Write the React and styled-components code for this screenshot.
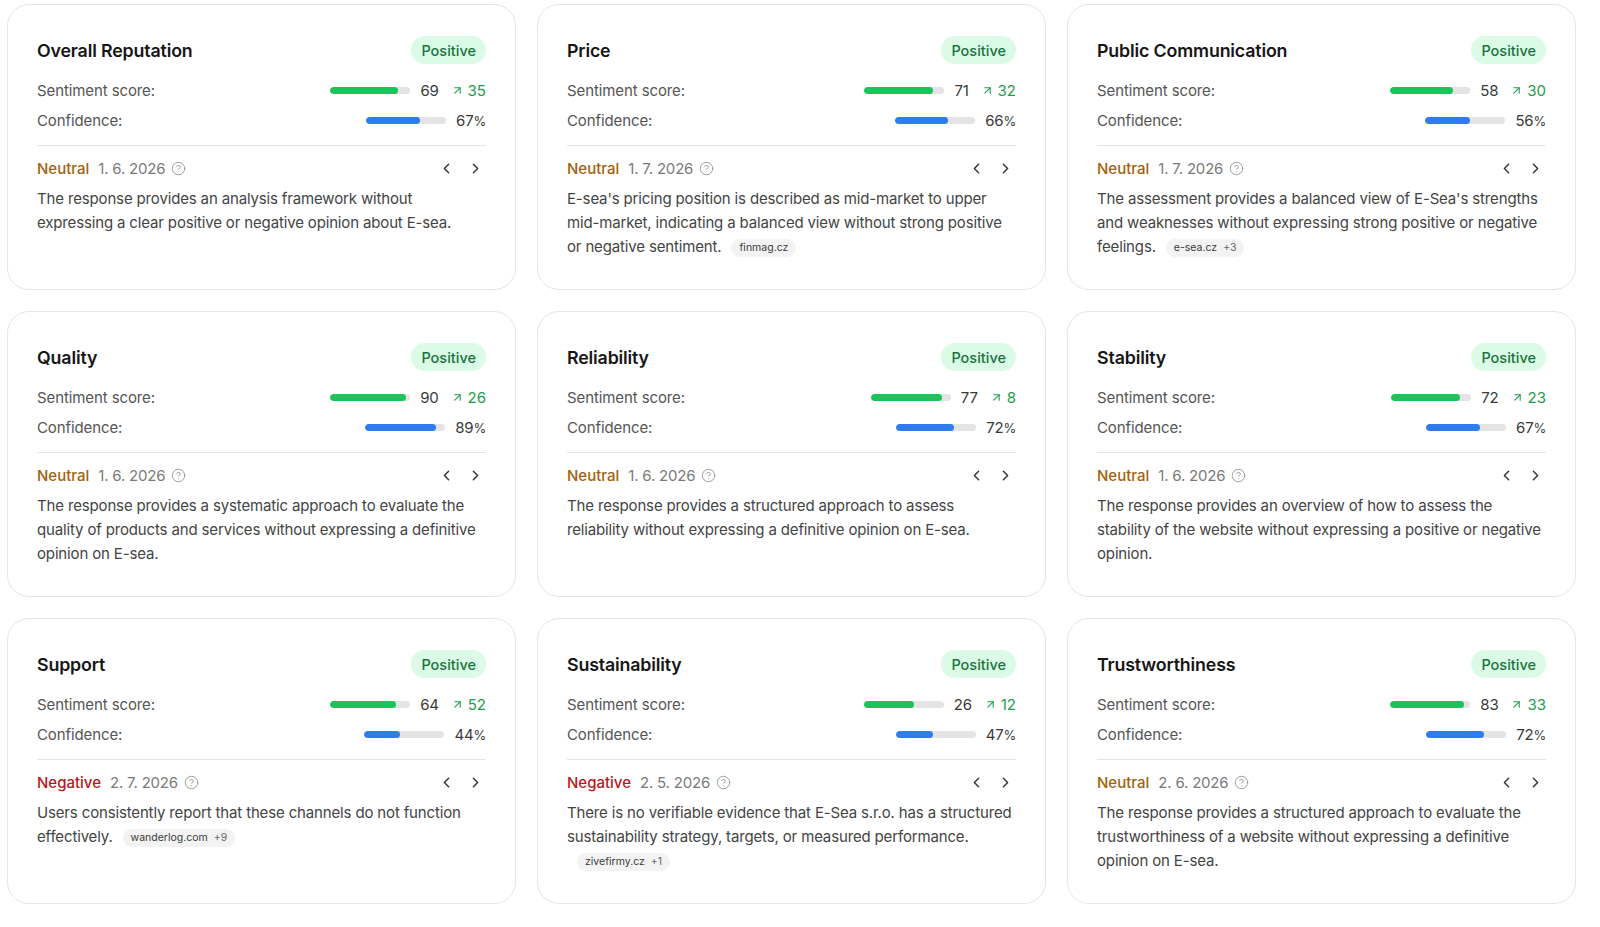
import React from 'react'
import styled, { createGlobalStyle } from 'styled-components'
import { ArrowUpRight, ChevronLeft, ChevronRight, CircleHelp } from 'lucide-react'

const GlobalStyle = createGlobalStyle`
  * { box-sizing: border-box; }
  body {
    margin: 0;
    background: #ffffff;
    font-family: Inter, "Noto Sans", sans-serif;
    color: #1f1f1f;
  }
`

const topics = [
  {
    title: 'Overall Reputation', score: 69, delta: 35, confidence: 67,
    tone: 'Neutral', date: '1. 6. 2026',
    text: 'The response provides an analysis framework without expressing a clear positive or negative opinion about E-sea.',
  },
  {
    title: 'Price', score: 71, delta: 32, confidence: 66,
    tone: 'Neutral', date: '1. 7. 2026',
    text: "E-sea's pricing position is described as mid-market to upper mid-market, indicating a balanced view without strong positive or negative sentiment.",
    source: 'finmag.cz',
  },
  {
    title: 'Public Communication', score: 58, delta: 30, confidence: 56,
    tone: 'Neutral', date: '1. 7. 2026',
    text: "The assessment provides a balanced view of E-Sea's strengths and weaknesses without expressing strong positive or negative feelings.",
    source: 'e-sea.cz', more: 3,
  },
  {
    title: 'Quality', score: 90, delta: 26, confidence: 89,
    tone: 'Neutral', date: '1. 6. 2026',
    text: 'The response provides a systematic approach to evaluate the quality of products and services without expressing a definitive opinion on E-sea.',
  },
  {
    title: 'Reliability', score: 77, delta: 8, confidence: 72,
    tone: 'Neutral', date: '1. 6. 2026',
    text: 'The response provides a structured approach to assess reliability without expressing a definitive opinion on E-sea.',
  },
  {
    title: 'Stability', score: 72, delta: 23, confidence: 67,
    tone: 'Neutral', date: '1. 6. 2026',
    text: 'The response provides an overview of how to assess the stability of the website without expressing a positive or negative opinion.',
  },
  {
    title: 'Support', score: 64, delta: 52, confidence: 44,
    tone: 'Negative', date: '2. 7. 2026',
    text: 'Users consistently report that these channels do not function effectively.',
    source: 'wanderlog.com', more: 9,
  },
  {
    title: 'Sustainability', score: 26, delta: 12, confidence: 47,
    tone: 'Negative', date: '2. 5. 2026',
    text: 'There is no verifiable evidence that E-Sea s.r.o. has a structured sustainability strategy, targets, or measured performance.',
    source: 'zivefirmy.cz', more: 1,
  },
  {
    title: 'Trustworthiness', score: 83, delta: 33, confidence: 72,
    tone: 'Neutral', date: '2. 6. 2026',
    text: 'The response provides a structured approach to evaluate the trustworthiness of a website without expressing a definitive opinion on E-sea.',
  },
]

const toneColors = {
  Neutral: '#a1620b',
  Negative: '#b3191f',
}

function TopicCard({ topic }) {
  // score runs from -100 to 100, so the bar is centred on zero
  const scoreFill = (topic.score + 100) / 2
  return (
    <Card>
      <Header>
        <Title>{topic.title}</Title>
        <Badge>Positive</Badge>
      </Header>
      <Metrics>
        <MetricRow>
          <Label>Sentiment score:</Label>
          <MetricValue>
            <Track>
              <Fill $color="#1ec25a" style={{ width: `${scoreFill}%` }} />
            </Track>
            <Number>{topic.score}</Number>
            <Delta>
              <ArrowUpRight size={13} strokeWidth={2} />
              {topic.delta}
            </Delta>
          </MetricValue>
        </MetricRow>
        <MetricRow>
          <Label>Confidence:</Label>
          <MetricValue>
            <Track>
              <Fill $color="#2f7cf0" style={{ width: `${topic.confidence}%` }} />
            </Track>
            <Number>{topic.confidence}<Percent>%</Percent></Number>
          </MetricValue>
        </MetricRow>
      </Metrics>
      <Divider />
      <AnswerHead>
        <Meta>
          <Tone $color={toneColors[topic.tone]}>{topic.tone}</Tone>
          <DateText>{topic.date}</DateText>
          <CircleHelp size={15} strokeWidth={1.5} color="#9a9a9a" />
        </Meta>
        <Pager>
          <PageButton><ChevronLeft size={17} strokeWidth={2} /></PageButton>
          <PageButton><ChevronRight size={17} strokeWidth={2} /></PageButton>
        </Pager>
      </AnswerHead>
      <Answer>
        {topic.text}
        {topic.source && (
          <Source>
            <span>{topic.source}</span>
            {topic.more && <More>+{topic.more}</More>}
          </Source>
        )}
      </Answer>
    </Card>
  )
}

export default function App() {
  return (
    <>
      <GlobalStyle />
      <Grid>
        {topics.map((topic) => (
          <TopicCard key={topic.title} topic={topic} />
        ))}
      </Grid>
    </>
  )
}

const Grid = styled.div`
  display: grid;
  grid-template-columns: repeat(3, 509px);
  grid-auto-rows: 286px;
  column-gap: 21px;
  row-gap: 21px;
  padding: 4px 0 0 7px;
`

const Card = styled.div`
  border: 1px solid #e6e6e6;
  border-radius: 22px;
  background: #fff;
  padding: 31px 29px 28px 29px;
  display: flex;
  flex-direction: column;
`

const Header = styled.div`
  display: flex;
  align-items: center;
  justify-content: space-between;
  height: 28px;
`

const Title = styled.h3`
  margin: 0;
  font-size: 17.8px;
  font-weight: 600;
  color: #161616;
  letter-spacing: -0.15px;
`

const Badge = styled.span`
  height: 28px;
  padding: 0 10px;
  border-radius: 14px;
  background: #dcfbe6;
  color: #17733d;
  font-size: 14.5px;
  font-weight: 500;
  display: inline-flex;
  align-items: center;
`

const Metrics = styled.div`
  margin-top: 14px;
  display: flex;
  flex-direction: column;
  gap: 6px;
`

const MetricRow = styled.div`
  display: flex;
  align-items: center;
  justify-content: space-between;
  height: 24px;
`

const Label = styled.span`
  font-size: 15px;
  color: #555;
  letter-spacing: -0.1px;
`

const MetricValue = styled.div`
  display: flex;
  align-items: center;
  gap: 10px;
`

const Track = styled.div`
  width: 80px;
  height: 7px;
  border-radius: 4px;
  background: #e4e4e4;
  overflow: hidden;
`

const Fill = styled.div`
  height: 100%;
  border-radius: 4px;
  background: ${(p) => p.$color};
`

const Number = styled.span`
  font-size: 15px;
  color: #3a3a3a;
  letter-spacing: -0.2px;
`

const Percent = styled.span`
  font-size: 13px;
`

const Delta = styled.span`
  display: inline-flex;
  align-items: center;
  gap: 4px;
  margin-left: 2px;
  font-size: 15px;
  color: #1f9d4c;
`

const Divider = styled.hr`
  margin: 13px 0 0;
  border: 0;
  border-top: 1px solid #e4e4e4;
`

const AnswerHead = styled.div`
  margin-top: 10px;
  height: 24px;
  display: flex;
  align-items: center;
  justify-content: space-between;
`

const Meta = styled.div`
  display: flex;
  align-items: center;
  gap: 6px;
`

const Tone = styled.span`
  font-size: 15px;
  font-weight: 500;
  color: ${(p) => p.$color};
  margin-right: 3px;
`

const DateText = styled.span`
  font-size: 15px;
  color: #7a7a7a;
  letter-spacing: -0.2px;
`

const Pager = styled.div`
  display: flex;
  gap: 5px;
  margin-right: -1px;
`

const PageButton = styled.button`
  width: 24px;
  height: 24px;
  padding: 0;
  border: 0;
  background: none;
  color: #333;
  display: inline-flex;
  align-items: center;
  justify-content: center;
  cursor: pointer;
`

const Answer = styled.p`
  margin: 7px 0 0;
  font-size: 15px;
  line-height: 24px;
  letter-spacing: -0.15px;
  color: #444;
`

const Source = styled.span`
  display: inline-flex;
  align-items: center;
  gap: 6px;
  height: 18px;
  margin-left: 10px;
  padding: 0 8px;
  border-radius: 9px;
  background: #f3f3f3;
  color: #3a3a3a;
  font-size: 10.5px;
  letter-spacing: 0;
  line-height: 18px;
  vertical-align: 1px;
`

const More = styled.span`
  color: #666;
`
